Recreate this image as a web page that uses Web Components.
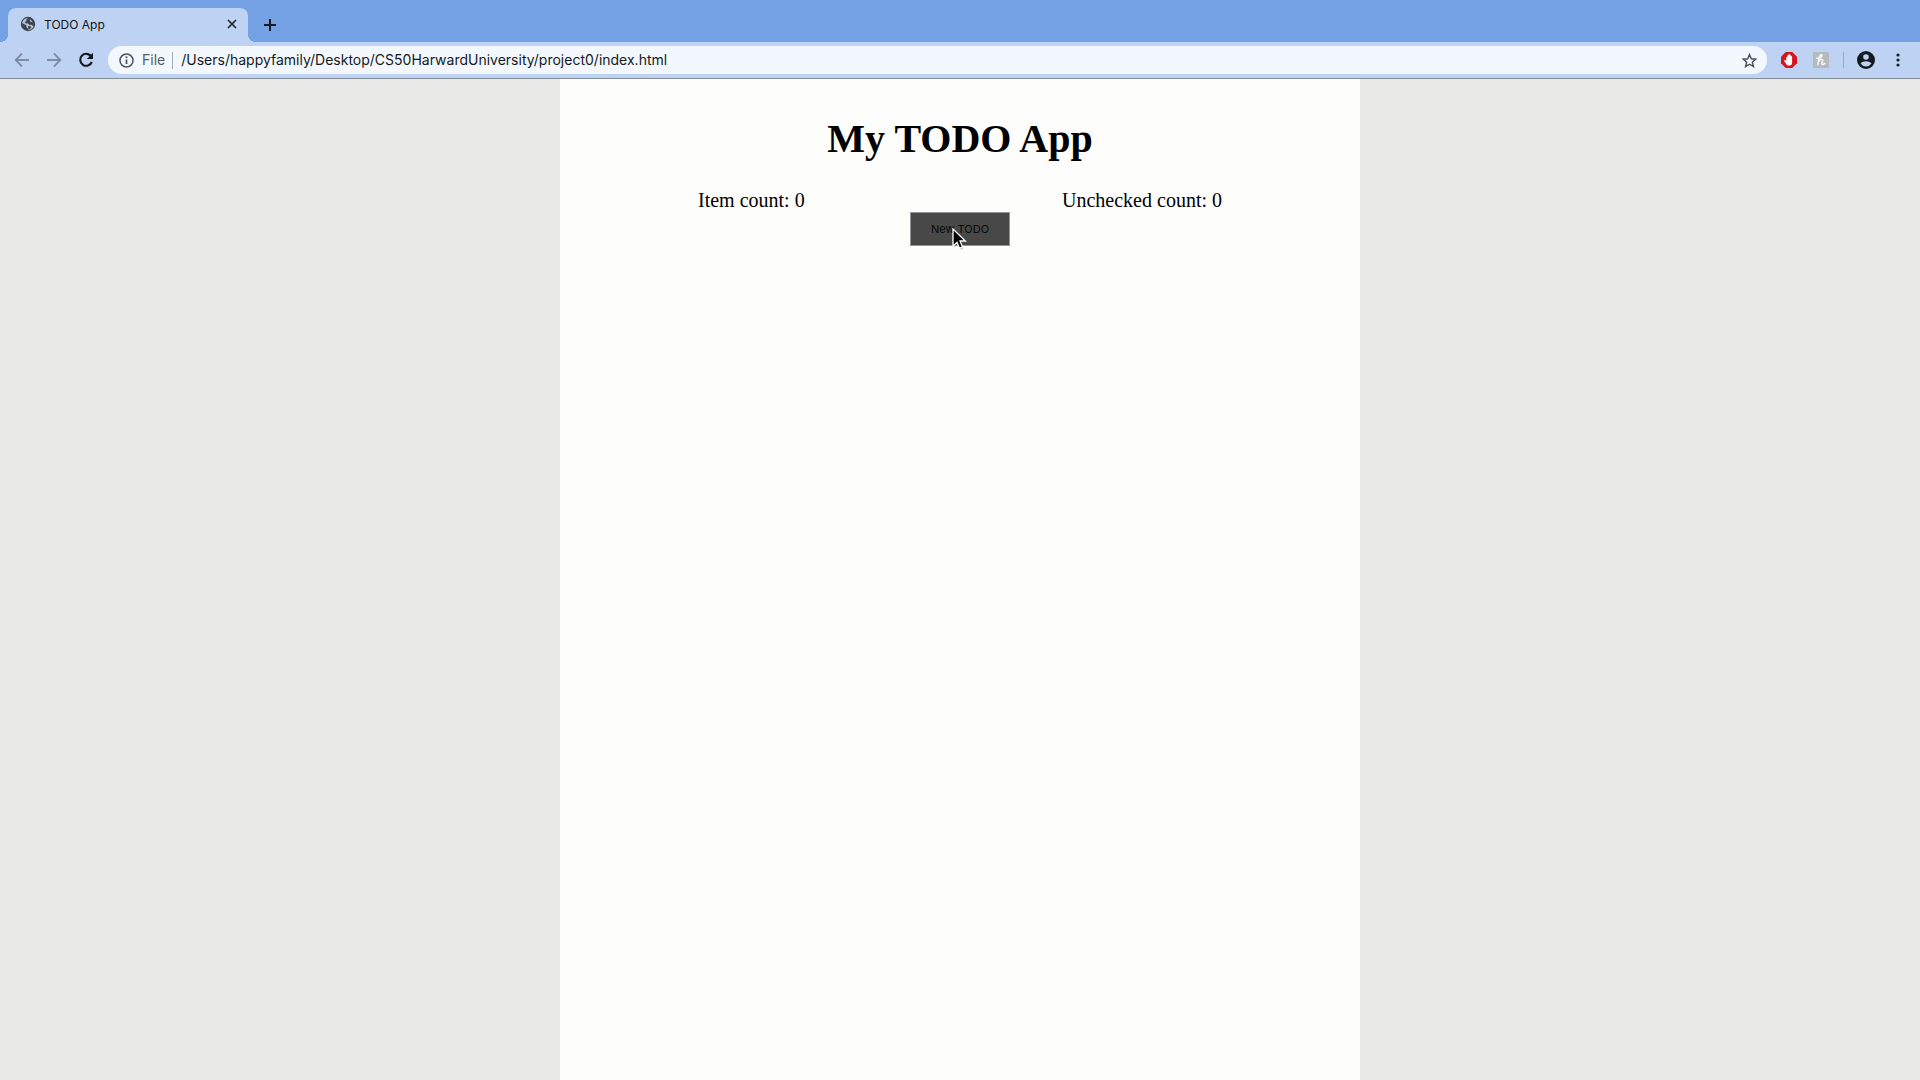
<!DOCTYPE html>
<html lang="en">
<head>
<meta charset="utf-8">
<title>TODO App</title>
<style>
html, body { margin: 0; height: 100%; }
body { font-family: Inter, "Liberation Sans", sans-serif; color: #111; }
</style>
</head>
<body>
<browser-window>
  <tab-strip slot="tabs"><browser-tab>TODO App</browser-tab></tab-strip>
  <nav-toolbar slot="toolbar" scheme="File" url="/Users/happyfamily/Desktop/CS50HarwardUniversity/project0/index.html"></nav-toolbar>
  <todo-app>
    <span slot="title">My TODO App</span>
    <todo-count slot="counts" value="0">Item count</todo-count>
    <todo-count slot="counts" value="0">Unchecked count</todo-count>
  </todo-app>
</browser-window>
<script>
const define = (name, html) => customElements.define(name, class extends HTMLElement {
  constructor() {
    super();
    this.attachShadow({ mode: "open" }).innerHTML = html;
  }
  connectedCallback() {
    for (const el of this.shadowRoot.querySelectorAll("[data-attr]")) {
      const value = this.getAttribute(el.dataset.attr) || "";
      if (el.localName === "input") el.value = value; else el.textContent = value;
    }
  }
});

const control = `button { display: flex; align-items: center; justify-content: center; padding: 0; border: 0; background: none; color: inherit; font: inherit; }
svg { display: block; }`;

define("browser-window", `<style>
:host { --bar: #bed3f4; display: flex; flex-direction: column; min-height: 100vh; background: #e9e9e8; }
main { flex: 1; display: flex; }
</style>
<slot name="tabs"></slot><slot name="toolbar"></slot><main><slot></slot></main>`);

define("tab-strip", `<style>
:host { display: flex; height: 34px; padding: 8px 8px 0; background: #74a1e4; }
${control}
button { width: 28px; height: 34px; margin-left: 8px; }
</style>
<slot></slot>
<button aria-label="New tab"><svg width="14" height="14" viewBox="0 0 14 14" fill="none" stroke="#151a20" stroke-width="2"><path d="M7 1v12M1 7h12"/></svg></button>`);

define("browser-tab", `<style>
:host { position: relative; display: flex; align-items: center; box-sizing: border-box; width: 240px; height: 34px; padding: 0 10px 2px 12px; border-radius: 8px 8px 0 0; background: var(--bar); font-size: 12px; }
:host::before, :host::after { content: ""; position: absolute; bottom: 0; width: 8px; height: 8px; }
:host::before { left: -8px; background: radial-gradient(circle at 0 0, transparent 8px, var(--bar) 8px); }
:host::after { right: -8px; background: radial-gradient(circle at 100% 0, transparent 8px, var(--bar) 8px); }
${control}
.name { flex: 1; margin-left: 8px; }
button { width: 12px; height: 20px; }
</style>
<svg width="16" height="16" viewBox="0 0 16 16"><circle cx="8" cy="8" r="7.2" fill="#3d444b"/><path d="M8.4 2.2 6.2 3.6 6.4 5.2 4.6 6.3 5.5 7.3 8.2 7.5 9.3 9 11.4 8.7 13.6 10.2A6 6 0 0 1 8 14L8 12.2 6.3 11.2 6.6 9.5 2.1 7A6 6 0 0 1 8.4 2.2ZM10.2 3.1 9.8 5.3 12.7 6.5Z" fill="#bed3f4" opacity=".9"/><path d="M8 10.2 10.5 10 11.3 11.8 8.5 13.8Z" fill="#3d444b"/></svg>
<span class="name"><slot></slot></span>
<button aria-label="Close tab"><svg width="10" height="10" viewBox="0 0 10 10" stroke="#1d2329" stroke-width="1.7"><path d="m1 1 8 8M9 1 1 9"/></svg></button>`);

define("nav-toolbar", `<style>
:host { display: flex; align-items: center; box-sizing: border-box; height: 37px; padding: 0 12px; border-bottom: 1px solid #858d94; background: var(--bar); font-size: 14px; }
${control}
button { width: 20px; height: 28px; }
.nav { display: flex; gap: 12px; }
form { flex: 1; display: flex; align-items: center; box-sizing: border-box; height: 28px; margin: 0 12px; padding: 0 8px 0 11px; border-radius: 14px; background: #f2f8fd; }
label { margin-left: 8px; color: #555c63; }
label, input { padding-bottom: 1px; }
input { flex: 1; min-width: 0; height: 16px; margin-left: 7px; padding-top: 0; padding-right: 0; padding-left: 8px; border: 0; border-left: 1px solid #a5abb3; background: none; color: #15191d; font: inherit; outline: 0; }
.extras { display: flex; align-items: center; gap: 12px; }
.sep { width: 1px; height: 16px; background: #94a8d2; }
</style>
<div class="nav">
<button aria-label="Back"><svg width="16" height="16" viewBox="0 0 16 16" fill="none" stroke="#7f8ca6" stroke-width="1.8"><path d="M15 8H2M8 1.5 1.7 8 8 14.5"/></svg></button>
<button aria-label="Forward"><svg width="16" height="16" viewBox="0 0 16 16" fill="none" stroke="#7f8ca6" stroke-width="1.8"><path d="M1 8h13M8 1.5 14.3 8 8 14.5"/></svg></button>
<button aria-label="Reload"><svg width="16" height="16" viewBox="0 0 16 16"><path d="M13.3 4.6A6 6 0 1 0 13.8 10" fill="none" stroke="#11161b" stroke-width="2.1"/><path d="M15 .8V7H8.8Z" fill="#11161b"/></svg></button>
</div>
<form onsubmit="return false">
<svg width="15" height="15" viewBox="0 0 15 15"><circle cx="7.5" cy="7.5" r="6.5" fill="none" stroke="#4e555b" stroke-width="1.5"/><path d="M7.5 6.5V11" stroke="#4e555b" stroke-width="1.7"/><circle cx="7.5" cy="4.3" r="1" fill="#4e555b"/></svg>
<label for="url" data-attr="scheme"></label>
<input id="url" type="text" spellcheck="false" data-attr="url">
<button type="button" aria-label="Bookmark"><svg width="15" height="15" viewBox="0 0 16 16" fill="none" stroke="#474e55" stroke-width="1.5"><path d="m8 1.7 1.9 4.5 4.8.4-3.7 3.2 1.2 4.7L8 12l-4.2 2.5L5 9.8 1.3 6.6l4.8-.4Z"/></svg></button>
</form>
<div class="extras">
<button aria-label="Ad blocker"><svg width="16" height="16" viewBox="0 0 16 16"><path d="M4.7 0h6.6L16 4.7v6.6L11.3 16H4.7L0 11.3V4.7Z" fill="#d9151b"/><path d="M5.2 5.2v4L4.1 8.1c-.7-.5-1.3.1-.9.8l2.3 3.6c.4.6.9.9 1.7.9h1.5c1.5 0 2.4-.9 2.4-2.4V4.7c0-.8-1.1-.8-1.1 0V3.3c0-.8-1.2-.8-1.2 0v-.6c0-.9-1.3-.9-1.3 0v1c0-.8-1.1-.8-1.1 0v1.5c0-.7-1.2-.7-1.2 0Z" fill="#fff"/></svg></button>
<button aria-label="Extension"><svg width="16" height="16" viewBox="0 0 16 16"><rect width="16" height="16" rx="1.5" fill="#b7babd"/><path d="M3.6 6.3c3-.3 5.4-1.4 5.4-2.8 0-1.7-2-.9-2.6 1.4L4.8 12.7M5.8 8.6c1.9-1.6 4.4-1.4 3.8.5l-.7 2.3c-.3 1.4 1.7 1.4 2.9 0" fill="none" stroke="#f6f7f8" stroke-width="1.6" stroke-linecap="round"/></svg></button>
<span class="sep"></span>
<button aria-label="Profile"><svg width="18" height="18" viewBox="0 0 18 18"><circle cx="9" cy="9" r="9" fill="#14191e"/><circle cx="9" cy="6" r="2.8" fill="#bed3f4"/><path d="M3.5 12.6C4.7 10.9 7 10.2 9 10.2s4.3.7 5.5 2.4A6.6 6.6 0 0 1 9 15.5a6.6 6.6 0 0 1-5.5-2.9Z" fill="#bed3f4"/></svg></button>
<button aria-label="Menu"><svg width="4" height="14" viewBox="0 0 4 14" fill="#1b2026"><circle cx="2" cy="2" r="1.6"/><circle cx="2" cy="7" r="1.6"/><circle cx="2" cy="12" r="1.6"/></svg></button>
</div>`);

define("todo-count", `<style>:host { display: block; }</style><slot></slot>: <span data-attr="value"></span>`);

define("todo-app", `<style>
:host { flex: 0 1 800px; box-sizing: border-box; margin: 0 auto; padding-top: 36px; background: #fdfdfc; color: #000; font: 20px/24px "Liberation Serif", serif; text-align: center; }
h1 { margin: 0; font-size: 40px; line-height: 48px; }
.counts { display: flex; justify-content: space-between; margin-top: 25px; padding: 0 138px; }
.add { position: relative; display: block; width: 100px; height: 34px; margin: 0 auto; padding: 0; border: 1px solid #92929a; background: #484848; color: #080808; font: 11px/16px Inter, sans-serif; }
.pointer { position: absolute; left: 41px; top: 15px; }
</style>
<h1><slot name="title"></slot></h1>
<div class="counts"><slot name="counts"></slot></div>
<button class="add">New TODO<svg class="pointer" width="18" height="24" viewBox="0 0 18 24" aria-hidden="true"><path d="M1 1v17l4-3.6 2.5 5.8 3-1.3L8 13h5.4Z" transform="translate(1 1.5)" fill="#000" opacity=".2"/><path d="M1 1v17l4-3.6 2.5 5.8 3-1.3L8 13h5.4Z" fill="#000" stroke="#fff" stroke-width="1.3"/></svg></button>`);
</script>
</body>
</html>
